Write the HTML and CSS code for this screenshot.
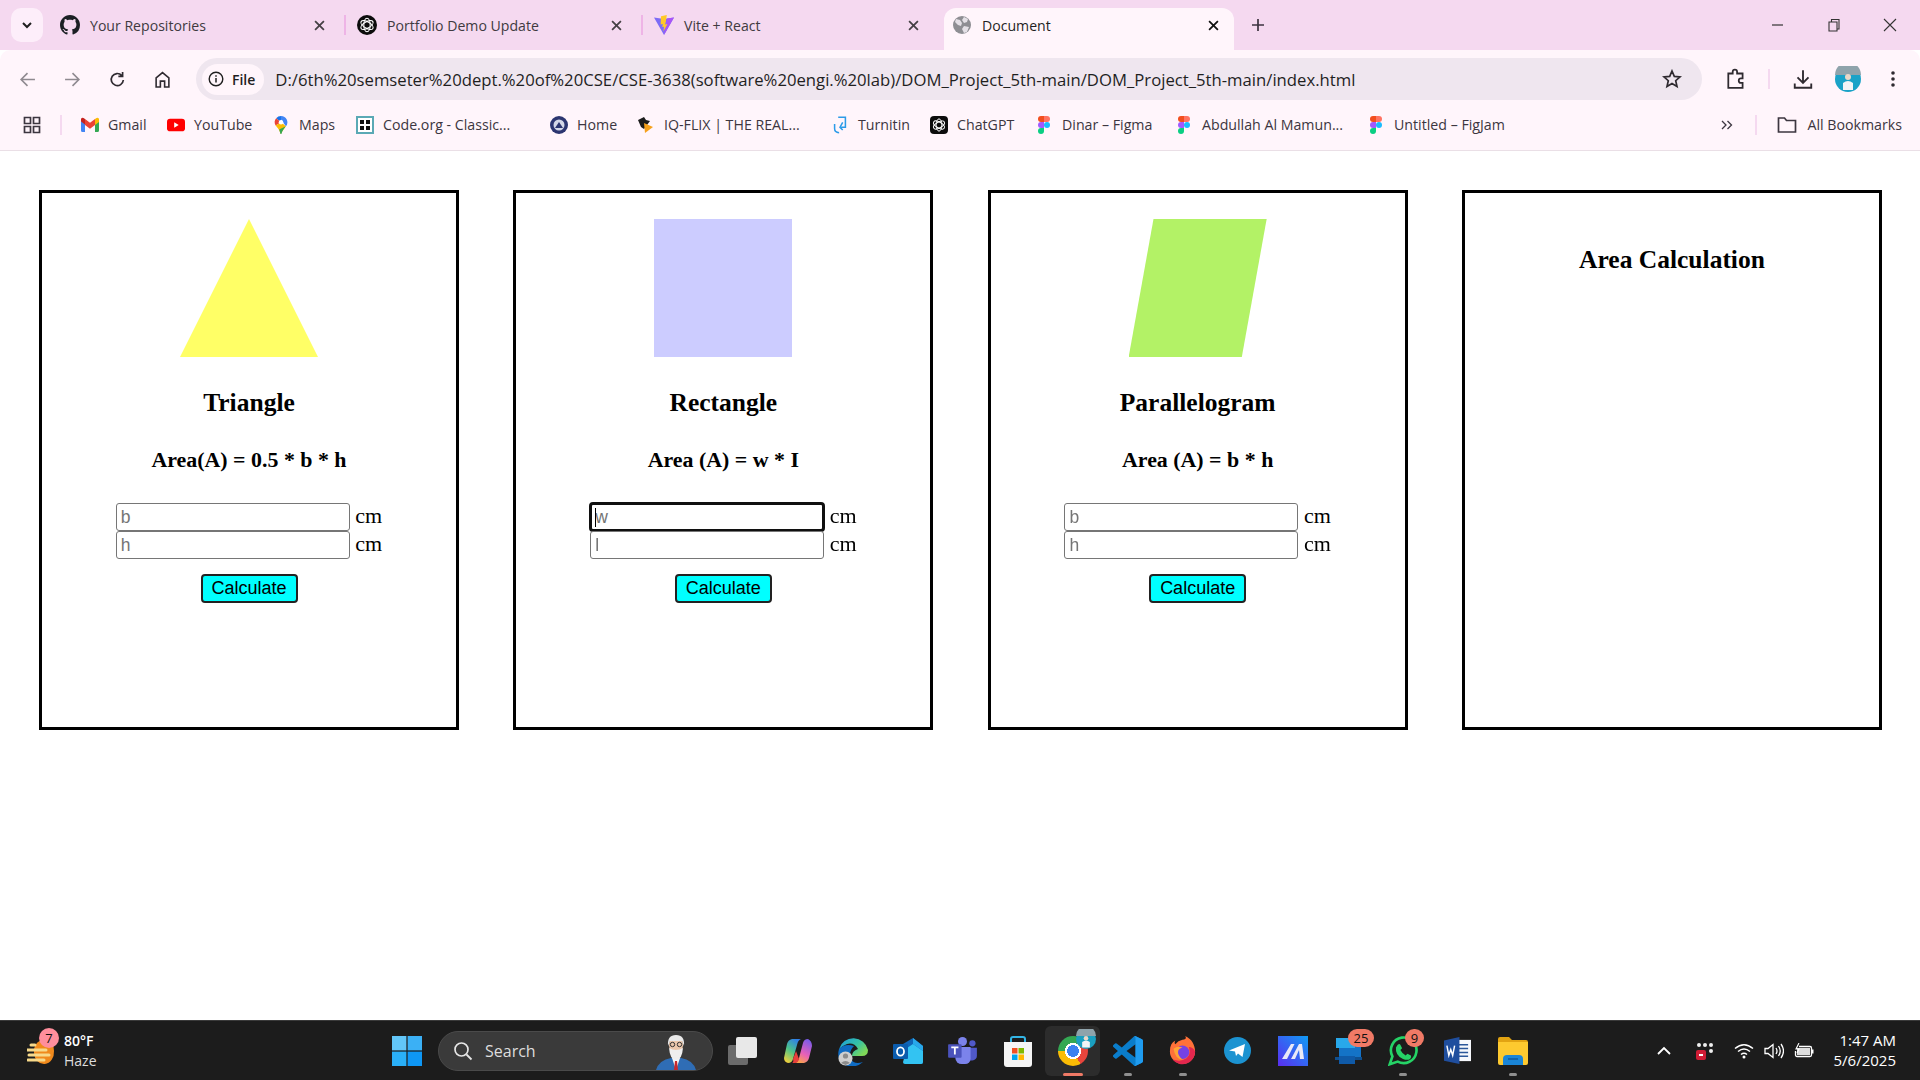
FILE: index.html
```html
<!DOCTYPE html>
<html lang="en">
<head>
<meta charset="UTF-8">
<meta name="viewport" content="width=device-width, initial-scale=1.0">
<title>Document</title>
<link rel="stylesheet" href="styles.css">
</head>
<body>

<svg class="defs" width="0" height="0">
    <symbol id="figma" viewBox="0 0 12 18">
        <path d="M6 0H3a3 3 0 0 0 0 6h3z" fill="#f24e1e"/>
        <path d="M6 0h3a3 3 0 0 1 0 6H6z" fill="#ff7262"/>
        <path d="M6 6H3a3 3 0 0 0 0 6h3z" fill="#a259ff"/>
        <circle cx="9" cy="9" r="3" fill="#1abcfe"/>
        <path d="M6 12H3a3 3 0 1 0 3 3z" fill="#0acf83"/>
    </symbol>
    <symbol id="knot" viewBox="0 0 20 20">
        <g fill="none" stroke="#fff" stroke-width="1.1">
            <ellipse cx="10" cy="10" rx="3.2" ry="6.8"/>
            <ellipse cx="10" cy="10" rx="3.2" ry="6.8" transform="rotate(60 10 10)"/>
            <ellipse cx="10" cy="10" rx="3.2" ry="6.8" transform="rotate(120 10 10)"/>
        </g>
    </symbol>
    <symbol id="close" viewBox="0 0 10 10">
        <path d="M1 1l8 8M9 1l-8 8" fill="none" stroke="currentColor" stroke-width="1.6"/>
    </symbol>
</svg>

<div class="tabstrip">
    <div class="tab-search">
        <svg width="10" height="7" viewBox="0 0 10 7"><path d="M1 1l4 4 4-4" fill="none" stroke="#1f1f1f" stroke-width="2"/></svg>
    </div>
    <div class="tab">
        <svg class="tab-icon" viewBox="0 0 16 16"><path fill="#1b1f24" d="M8 0C3.58 0 0 3.58 0 8c0 3.54 2.29 6.53 5.47 7.59.4.07.55-.17.55-.38 0-.19-.01-.82-.01-1.49-2.01.37-2.53-.49-2.69-.94-.09-.23-.48-.94-.82-1.13-.28-.15-.68-.52-.01-.53.63-.01 1.08.58 1.23.82.72 1.21 1.87.87 2.33.66.07-.52.28-.87.51-1.07-1.78-.2-3.64-.89-3.64-3.95 0-.87.31-1.59.82-2.15-.08-.2-.36-1.02.08-2.12 0 0 .67-.21 2.2.82.64-.18 1.32-.27 2-.27.68 0 1.36.09 2 .27 1.53-1.04 2.2-.82 2.2-.82.44 1.1.16 1.92.08 2.12.51.56.82 1.27.82 2.15 0 3.07-1.87 3.75-3.65 3.95.29.25.54.73.54 1.48 0 1.07-.01 1.93-.01 2.2 0 .21.15.46.55.38A8.013 8.013 0 0 0 16 8c0-4.42-3.58-8-8-8z"/></svg>
        <span class="tab-title">Your Repositories</span>
        <svg class="tab-close"><use href="#close"/></svg>
    </div>
    <div class="tab">
        <svg class="tab-icon" viewBox="0 0 20 20"><circle cx="10" cy="10" r="10" fill="#0c0c0c"/><use href="#knot" width="20" height="20"/></svg>
        <span class="tab-title">Portfolio Demo Update</span>
        <svg class="tab-close"><use href="#close"/></svg>
    </div>
    <div class="tab">
        <svg class="tab-icon" viewBox="0 0 20 20">
            <path d="M0 2.5L10 4l10-1.5L10 20z" fill="#7c6cf6"/>
            <path d="M10 20L20 2.5 13 3.6z" fill="#a855f7"/>
            <path d="M12.8 0L7 1.2 6.6 9.5l2.2-.4-.5 3 1.8-.4-.7 4.8 4-7.5-2.3.4.8-3z" fill="#ffc928"/>
        </svg>
        <span class="tab-title">Vite + React</span>
        <svg class="tab-close"><use href="#close"/></svg>
    </div>
    <div class="tab tab-active">
        <svg class="tab-icon" viewBox="0 0 20 20">
            <circle cx="10" cy="10" r="9" fill="#8e8e93"/>
            <path d="M4 4l4 1 2 3-1 3-3-1-3-3zM12 2l4 2-1 3-3 1-2-3zM12 11l5 1-2 5-3 1-2-4z" fill="#e4e0e6"/>
        </svg>
        <span class="tab-title">Document</span>
        <svg class="tab-close"><use href="#close"/></svg>
    </div>
    <svg class="new-tab" viewBox="0 0 14 14"><path d="M7 1v12M1 7h12" fill="none" stroke="#3c3340" stroke-width="1.7"/></svg>
    <div class="window-controls">
        <svg viewBox="0 0 14 14"><path d="M1 7h11" stroke="#333" stroke-width="1.2"/></svg>
        <svg viewBox="0 0 14 14"><path d="M2 4h8v9H2zM4.5 4V1.500H12V11h-2" fill="none" stroke="#333" stroke-width="1.1"/></svg>
        <svg viewBox="0 0 14 14"><path d="M1 1l12 12M13 1L1 13" fill="none" stroke="#333" stroke-width="1.1"/></svg>
    </div>
</div>

<div class="toolbar">
    <div class="nav-buttons">
        <svg viewBox="0 0 16 16"><path d="M15 8H2M8 2L2 8l6 6" fill="none" stroke="#8f8a90" stroke-width="1.5"/></svg>
        <svg viewBox="0 0 16 16"><path d="M1 8h13M8 2l6 6-6 6" fill="none" stroke="#8f8a90" stroke-width="1.5"/></svg>
        <svg viewBox="0 0 16 16"><path d="M13.5 8.5A5.7 5.7 0 1 1 12 4.2M12.8 1v4h-4" fill="none" stroke="#2f2a30" stroke-width="1.6"/></svg>
        <svg viewBox="0 0 16 16"><path d="M2 15V6.500L8 1.500l6 5V15H10V9.500H6V15z" fill="none" stroke="#2f2a30" stroke-width="1.5"/></svg>
    </div>
    <div class="omnibox">
        <div class="site-chip">
            <svg width="16" height="16" viewBox="0 0 16 16"><circle cx="8" cy="8" r="6.8" fill="none" stroke="#1f1f1f" stroke-width="1.4"/><path d="M8 7v4.500M8 4.200v1.600" stroke="#1f1f1f" stroke-width="1.5"/></svg>
            <span>File</span>
        </div>
        <span class="url">D:/6th%20semseter%20dept.%20of%20CSE/CSE-3638(software%20engi.%20lab)/DOM_Project_5th-main/DOM_Project_5th-main/index.html</span>
        <svg class="star" viewBox="0 0 20 20"><path d="M10 2l2.3 5.4 5.7.5-4.300 3.800 1.300 5.700-5-3-5 3 1.300-5.700L2 7.900l5.700-.5z" fill="none" stroke="#2f2a30" stroke-width="1.7"/></svg>
    </div>
    <div class="toolbar-right">
        <svg class="tool-ext" viewBox="0 0 20 20"><path d="M3 5h4V3.500a2 2 0 0 1 4 0V5h5v4.500h-1.500a2 2 0 0 0 0 4H16V18H3z" fill="none" stroke="#2f2a30" stroke-width="1.6"/></svg>
        <span class="tool-sep"></span>
        <svg class="tool-dl" viewBox="0 0 20 20"><path d="M10 2v11M5 8.500l5 5 5-5M2.500 14v4h15v-4" fill="none" stroke="#2f2a30" stroke-width="1.7"/></svg>
        <svg class="tool-avatar" viewBox="0 0 26 26">
            <circle cx="13" cy="13" r="13" fill="#1aa2c7"/>
            <path d="M0 9a13 13 0 0 1 26 0z" fill="#8fa3ab"/>
            <circle cx="13" cy="11" r="3" fill="#e9d7c8"/>
            <path d="M8 24v-7q5-4 10 0v7z" fill="#f2f4f6"/>
        </svg>
        <svg class="tool-menu" viewBox="0 0 4 18"><circle cx="2" cy="3" r="1.800" fill="#2f2a30"/><circle cx="2" cy="9" r="1.800" fill="#2f2a30"/><circle cx="2" cy="15" r="1.800" fill="#2f2a30"/></svg>
    </div>
</div>

<div class="bookmarks">
    <svg class="apps-icon" viewBox="0 0 18 18"><path d="M1.500 1.500h6v6h-6zM10.500 1.500h6v6h-6zM1.500 10.500h6v6h-6zM10.500 10.500h6v6h-6z" fill="none" stroke="#3c3640" stroke-width="1.7"/></svg>
    <span class="bm-sep"></span>
    <div class="bm bm-gmail">
        <svg viewBox="0 0 18 14"><path d="M0 3v9.500A1.500 1.500 0 0 0 1.500 14H4V6z" fill="#4285f4"/><path d="M18 3v9.500a1.500 1.500 0 0 1-1.500 1.500H14V6z" fill="#34a853"/><path d="M0 3.500L4 6.500V1L2.500 0A1.600 1.600 0 0 0 0 1.500z" fill="#c5221f"/><path d="M4 1v6l5 3.700L14 7V1L9 4.800z" fill="#ea4335"/><path d="M14 1v6l4-3V1.500A1.600 1.600 0 0 0 15.500 0z" fill="#fbbc04"/></svg>
        <span>Gmail</span>
    </div>
    <div class="bm bm-youtube">
        <svg viewBox="0 0 20 14"><rect width="20" height="14" rx="3.5" fill="#f00"/><path d="M8 4l5 3-5 3z" fill="#fff"/></svg>
        <span>YouTube</span>
    </div>
    <div class="bm bm-maps">
        <svg viewBox="0 0 14 20"><path d="M7 0a7 7 0 0 1 5.400 11.500L7 4z" fill="#4285f4"/><path d="M7 0a7 7 0 0 0-5.400 2.500L7 7z" fill="#1a73e8"/><path d="M1.600 2.500A7 7 0 0 0 1 10.500L7 7z" fill="#ea4335"/><path d="M1 10.500c2 2.500 4.500 4.500 5.500 9.500L12.400 11.500 7 7z" fill="#fbbc04"/><path d="M6.500 20h1c.7-3.500 2.900-5.700 4.900-8.500L5 15z" fill="#34a853"/><circle cx="7" cy="7" r="2.500" fill="#fff"/></svg>
        <span>Maps</span>
    </div>
    <div class="bm bm-code">
        <svg viewBox="0 0 18 18"><rect x="1" y="1" width="16" height="16" fill="#fff" stroke="#5aa9b5" stroke-width="2"/><path d="M4 4h4v4H4zM10 4h4v4h-4zM4 10h4v4H4zM10 10h4v4h-4z" fill="#111"/></svg>
        <span>Code.org - Classic...</span>
    </div>
    <div class="bm bm-home">
        <svg viewBox="0 0 18 18"><circle cx="9" cy="9" r="9" fill="#2c3570"/><circle cx="9" cy="9" r="5.500" fill="#d5d8e8"/><path d="M5 12l4-6 4 6z" fill="#2c3570"/></svg>
        <span>Home</span>
    </div>
    <div class="bm bm-iq">
        <svg viewBox="0 0 18 18"><path d="M1 4l6-3 2 3 4 1-3 4-3 4-3-2z" fill="#1c1c1c"/><path d="M7 7l9 4-8 6z" fill="#f6a11b"/></svg>
        <span>IQ-FLIX | THE REAL...</span>
    </div>
    <div class="bm bm-turnitin">
        <svg viewBox="0 0 16 20"><path d="M6 1.500h8v11H9" fill="none" stroke="#2c9be8" stroke-width="1.7"/><path d="M11 7l-3 5.500 3 3M2 9v5q0 4.500 5 4.500" fill="none" stroke="#2c9be8" stroke-width="1.7"/></svg>
        <span>Turnitin</span>
    </div>
    <div class="bm bm-gpt">
        <svg viewBox="0 0 20 20"><rect width="20" height="20" rx="4.5" fill="#0c0c0c"/><use href="#knot" width="20" height="20"/></svg>
        <span>ChatGPT</span>
    </div>
    <div class="bm bm-figma">
        <svg><use href="#figma"/></svg>
        <span>Dinar – Figma</span>
    </div>
    <div class="bm bm-abdullah">
        <svg><use href="#figma"/></svg>
        <span>Abdullah Al Mamun...</span>
    </div>
    <div class="bm bm-untitled">
        <svg><use href="#figma"/></svg>
        <span>Untitled – FigJam</span>
    </div>
    <svg class="bm-more" viewBox="0 0 12 10"><path d="M1 1l4 4-4 4M6.500 1l4 4-4 4" fill="none" stroke="#3c3640" stroke-width="1.3"/></svg>
    <span class="bm-sep bm-sep-end"></span>
    <svg class="folder-icon" viewBox="0 0 20 18"><path d="M1.500 16V2h6l2 2.500h9V16z" fill="none" stroke="#3c3640" stroke-width="1.7"/></svg>
    <span class="bm-all">All Bookmarks</span>
</div>

<main class="page">
    <section class="card">
        <div class="shape triangle"></div>
        <h2>Triangle</h2>
        <h3>Area(A) = 0.5 * b * h</h3>
        <div class="fields">
            <div><input type="text" placeholder="b"> cm</div>
            <div><input type="text" placeholder="h"> cm</div>
        </div>
        <button>Calculate</button>
    </section>
    <section class="card">
        <div class="shape rectangle"></div>
        <h2>Rectangle</h2>
        <h3>Area (A) = w * I</h3>
        <div class="fields">
            <div class="focused"><input type="text" placeholder="w" autofocus> cm<span class="caret"></span></div>
            <div><input type="text" placeholder="l"> cm</div>
        </div>
        <button>Calculate</button>
    </section>
    <section class="card">
        <div class="shape parallelogram"></div>
        <h2>Parallelogram</h2>
        <h3>Area (A) = b * h</h3>
        <div class="fields">
            <div><input type="text" placeholder="b"> cm</div>
            <div><input type="text" placeholder="h"> cm</div>
        </div>
        <button>Calculate</button>
    </section>
    <section class="card card-result">
        <h2>Area Calculation</h2>
    </section>
</main>

<footer class="taskbar">
    <div class="weather">
        <div class="weather-icon">
            <svg viewBox="0 0 28 32" width="28" height="32">
                <path d="M7 14a10 10 0 0 1 20 2 10 12 0 0 1-20 2z" fill="#f08a1d"/>
                <path d="M0 15h19M2 20h20M1 25h16" stroke="#f7d98a" stroke-width="3" stroke-linecap="round"/>
                <path d="M4 10h4" stroke="#f7d98a" stroke-width="3" stroke-linecap="round"/>
            </svg>
            <span class="weather-badge">7</span>
        </div>
        <div class="weather-text">
            <span class="temp">80°F</span>
            <span>Haze</span>
        </div>
    </div>
    <div class="task-item">
        <svg width="30" height="30" viewBox="0 0 30 30"><path d="M0 0h14.400v14.400H0z" fill="#62c6f8"/><path d="M15.600 0H30v14.400H15.600z" fill="#3bb0f5"/><path d="M0 15.600h14.400V30H0z" fill="#2ab0f8"/><path d="M15.600 15.600H30V30H15.600z" fill="#0e97f5"/></svg>
    </div>
    <div class="search-box">
        <svg width="20" height="20" viewBox="0 0 20 20"><circle cx="8.500" cy="8.500" r="6.500" fill="none" stroke="#e6e6e6" stroke-width="1.7"/><path d="M13.500 13.500l5 5" stroke="#e6e6e6" stroke-width="1.8"/></svg>
        <span>Search</span>
        <svg class="search-art" width="42" height="36" viewBox="0 0 42 36">
            <path d="M1 36q3-10 15-12h10q12 2 15 12z" fill="#2f6db5"/>
            <path d="M17 24l4 12 4-12z" fill="#f4f4f4"/>
            <path d="M20 27h2l1 9h-4z" fill="#c8282b"/>
            <ellipse cx="21" cy="11" rx="7" ry="9" fill="#ebc7ac"/>
            <path d="M13 12q-1-11 8-11t8 11l-2-5H15z" fill="#e9e9e9"/>
            <path d="M14 14q7 4 14 0-1 12-7 12t-7-12z" fill="#eeeeee"/>
            <circle cx="17.500" cy="10.500" r="2.200" fill="none" stroke="#333"/>
            <circle cx="24.500" cy="10.500" r="2.200" fill="none" stroke="#333"/>
        </svg>
    </div>
    <div class="task-item">
        <svg width="30" height="30" viewBox="0 0 30 30"><rect x="0" y="9" width="20" height="20" rx="2" fill="#6b6b6b"/><rect x="8" y="1" width="21" height="21" rx="2" fill="#e8e8e8"/></svg>
    </div>
    <div class="task-item">
        <svg width="28" height="24" viewBox="0 0 28 24">
            <defs>
                <linearGradient id="copilotLeft" x1="0.7" y1="0" x2="0.2" y2="1"><stop offset="0" stop-color="#2f7fe8"/><stop offset=".5" stop-color="#4cc48a"/><stop offset="1" stop-color="#f4d03a"/></linearGradient>
                <linearGradient id="copilotRight" x1="0.7" y1="0" x2="0.3" y2="1"><stop offset="0" stop-color="#7a5be8"/><stop offset=".6" stop-color="#e860b8"/><stop offset="1" stop-color="#f9a34a"/></linearGradient>
            </defs>
            <path d="M8 0h9q-3 1-4 6l-4 14q-1 4-5 4-4-1-4-5L3 5q1-4 5-5z" fill="url(#copilotLeft)"/>
            <path d="M11 24h9q4-1 5-5l3-12q0-5-4-7-4 0-5 4l-4 15q-1 4-4 5z" fill="url(#copilotRight)"/>
            <path d="M9 20l3-8 3 8q-1 4-4 4H8q2-1 1-4z" fill="#e8403c"/>
        </svg>
    </div>
    <div class="task-item">
        <svg width="30" height="30" viewBox="0 0 30 30">
            <defs><linearGradient id="edgeTop" x1="0" y1="0" x2="1" y2="0.6"><stop offset="0" stop-color="#1b9de2"/><stop offset=".6" stop-color="#35c1a5"/><stop offset="1" stop-color="#7fd858"/></linearGradient></defs>
            <path d="M1 13A15 15 0 0 1 30 14q0 6-6 6H14q0-5 6-7-4-7-11-5-5 2-8 5z" fill="url(#edgeTop)"/>
            <path d="M1 13q-3 11 6 16 10 4 18-3-9 3-12-3-3-7 3-13-9-3-15 3z" fill="#0f6cc4"/>
            <circle cx="7.500" cy="22.500" r="7" fill="#cfcfcf"/><circle cx="7.500" cy="20" r="2.600" fill="#8c8c8c"/><path d="M3 27q4.500-4 9 0l-4.500 2z" fill="#8c8c8c"/>
        </svg>
    </div>
    <div class="task-item">
        <svg width="30" height="26" viewBox="0 0 30 26">
            <path d="M10 6l10-6 10 8v16a2 2 0 0 1-2 2H12z" fill="#1066b8"/>
            <path d="M14 10l6-4 10 7v11a2 2 0 0 1-2 2H12a2 2 0 0 1-2-2z" fill="#33c3f2"/>
            <path d="M20 0l10 8v5L20 6z" fill="#28a8ea"/>
            <rect x="0" y="6" width="15" height="15" rx="1" fill="#0b5cad"/>
            <ellipse cx="7.500" cy="13.500" rx="3.500" ry="4.200" fill="none" stroke="#fff" stroke-width="1.8"/>
        </svg>
    </div>
    <div class="task-item">
        <svg width="29" height="27" viewBox="0 0 32 30">
            <circle cx="16" cy="5" r="5" fill="#7b83eb"/><circle cx="27" cy="7" r="3.500" fill="#5059c9"/>
            <path d="M22 12h10v9a5 5 0 0 1-5 5h-5z" fill="#5059c9"/>
            <path d="M8 11h17v13a6 6 0 0 1-6 6h-4a7 7 0 0 1-7-7z" fill="#7b83eb"/>
            <rect x="0" y="8" width="15" height="15" rx="1" fill="#4b53bc"/>
            <path d="M3.500 11.500h8M7.500 11.500v8" stroke="#fff" stroke-width="2"/>
        </svg>
    </div>
    <div class="task-item">
        <svg width="30" height="32" viewBox="0 0 30 32">
            <path d="M8 9V4a2 2 0 0 1 2-2h10a2 2 0 0 1 2 2v5" fill="none" stroke="#33b5e5" stroke-width="2"/>
            <path d="M1 7h28v22a3 3 0 0 1-3 3H4a3 3 0 0 1-3-3z" fill="#f5f5f5"/>
            <path d="M9 13h5.500v5.500H9z" fill="#f25022"/><path d="M15.500 13H21v5.500h-5.500z" fill="#7fba00"/>
            <path d="M9 19.500h5.500V25H9z" fill="#00a4ef"/><path d="M15.500 19.500H21V25h-5.500z" fill="#ffb900"/>
        </svg>
    </div>
    <div class="task-item task-active">
        <div class="chrome-logo"></div>
        <svg class="chrome-badge" width="20" height="20" viewBox="0 0 26 26">
            <circle cx="13" cy="13" r="13" fill="#1a9fc0"/>
            <path d="M0 9a13 13 0 0 1 26 0z" fill="#8fa3ab"/>
            <circle cx="13" cy="12" r="3" fill="#e9d7c8"/>
            <path d="M8 24v-7q5-4 10 0v7z" fill="#f2f4f6"/>
        </svg>
        <span class="task-dot"></span>
    </div>
    <div class="task-item">
        <svg width="30" height="30" viewBox="0 0 100 100">
            <path fill-rule="evenodd" fill="#0a7dcb" d="M96.500 10.800L75.900.9a6.200 6.200 0 0 0-7.100 1.200L29.400 38 12.200 25a4.200 4.200 0 0 0-5.300.2l-5.500 5a4.200 4.200 0 0 0 0 6.200L16.300 50 1.400 63.600a4.200 4.200 0 0 0 0 6.200l5.500 5a4.200 4.200 0 0 0 5.300.2l17.200-13 39.400 35.900a6.200 6.200 0 0 0 7.100 1.200l20.600-9.900a6.200 6.200 0 0 0 3.500-5.600V16.400a6.200 6.200 0 0 0-3.500-5.600zM75 27.200L45.100 50 75 72.800z"/>
            <path fill="#1f9cf0" d="M71 .4q2.500-.4 4.900.5l20.600 9.900a6.200 6.200 0 0 1 3.500 5.600v67.200a6.200 6.200 0 0 1-3.500 5.600L75.900 99.100q-2.400.9-4.900.5 4-1.600 4-5.600V6q0-4-4-5.600z"/>
        </svg>
        <span class="task-dot"></span>
    </div>
    <div class="task-item">
        <svg width="27" height="29" viewBox="0 0 30 32">
            <path d="M15 4c6 0 3-4 3-4 7 3 11 10 11 17a14 14 0 0 1-28 0C1 11 3 7 7 5c-1 2-1 3 0 4q3-4 8-5z" fill="#ff7139"/>
            <path d="M29 17A14 14 0 0 1 4 26q9 3 15-1 6-5 3-13 5 0 7 5z" fill="#e3274e"/>
            <circle cx="15" cy="18" r="7.500" fill="#7542e5"/>
            <path d="M5 14q5-4 10-1-5 1-5 5t5 8q-8 0-10-12z" fill="#ffa436"/>
        </svg>
        <span class="task-dot"></span>
    </div>
    <div class="task-item">
        <svg width="27" height="27" viewBox="0 0 27 27">
            <circle cx="13.500" cy="13.500" r="13.500" fill="#1c93d1"/>
            <path d="M5 13.500l16-6.500-2.500 13-4.500-3.500-2 2.500-1-4.500z" fill="#fff"/>
        </svg>
    </div>
    <div class="task-item">
        <svg width="30" height="30" viewBox="0 0 30 30">
            <defs><linearGradient id="cursorbg" x1="0" y1="1" x2="1" y2="0"><stop offset="0" stop-color="#5a2df0"/><stop offset="1" stop-color="#0f9cf5"/></linearGradient></defs>
            <rect width="30" height="30" fill="url(#cursorbg)"/>
            <path d="M4 23L13 8h3.500L9 23zM13 23L21 8h3l2 15h-4l-1-9-4 9z" fill="#e9e9f7"/>
        </svg>
    </div>
    <div class="task-item">
        <svg width="29" height="26" viewBox="0 0 29 26">
            <rect x="2" y="19" width="27" height="3" fill="#0f4f8f"/>
            <rect x="3" y="0" width="19" height="10" fill="#28a8ea"/><rect x="6" y="10" width="16" height="8" fill="#1473c7"/><rect x="6" y="18" width="16" height="8" fill="#0f5aa8"/>
            <rect x="22" y="5" width="6" height="14" fill="#1473c7"/>
        </svg>
        <span class="task-count">25</span>
    </div>
    <div class="task-item">
        <svg width="30" height="30" viewBox="0 0 34 34">
            <path d="M2 32l3-9A14.500 14.500 0 1 1 11 29z" fill="none" stroke="#25d366" stroke-width="3"/>
            <path d="M11 10q2-2 3 0l2 4-2 2q2 4 6 6l2-2 4 2q1 2-1 4-3 2-8 0-9-4-8-13z" fill="#25d366"/>
        </svg>
        <span class="task-count task-count-small">9</span>
        <span class="task-dot"></span>
    </div>
    <div class="task-item">
        <svg width="27" height="27" viewBox="0 0 28 28">
            <rect x="12" y="3" width="16" height="22" fill="#f6f8fc"/>
            <path d="M15 8h10M15 12h10M15 16h10M15 20h10" stroke="#2b579a" stroke-width="1.5"/>
            <path d="M0 3.500L16 0v28L0 24.500z" fill="#1f4e9e"/>
            <path d="M3 9l2 10 2-6 2 6 2-10" fill="none" stroke="#fff" stroke-width="1.5"/>
        </svg>
    </div>
    <div class="task-item">
        <svg width="30" height="28" viewBox="0 0 30 28">
            <path d="M0 2a2 2 0 0 1 2-2h9l3 3h14a2 2 0 0 1 2 2v3H0z" fill="#e2a312"/>
            <path d="M0 5h30v21a2 2 0 0 1-2 2H2a2 2 0 0 1-2-2z" fill="#fdc92f"/>
            <path d="M5 28v-6a4 4 0 0 1 4-4h12a4 4 0 0 1 4 4v6z" fill="#1a85d6"/>
            <path d="M10 22h10" stroke="#0c5a9e" stroke-width="1.5"/>
        </svg>
        <span class="task-dot"></span>
    </div>
    <div class="tray">
        <svg class="tray-up" width="14" height="9" viewBox="0 0 14 9"><path d="M1 8l6-6 6 6" fill="none" stroke="#fff" stroke-width="1.8"/></svg>
        <svg class="tray-app" width="18" height="18" viewBox="0 0 18 18">
            <rect x="0" y="8" width="10" height="10" rx="2" fill="#d01c35"/>
            <circle cx="3" cy="3" r="2" fill="#eee"/><circle cx="9" cy="3" r="2" fill="#eee"/><circle cx="15" cy="3" r="2" fill="#eee"/><circle cx="15" cy="9" r="2" fill="#eee"/>
            <path d="M3 13h4" stroke="#fff" stroke-width="2"/>
        </svg>
        <svg class="tray-wifi" width="20" height="16" viewBox="0 0 20 16"><path d="M1 5.500q9-7.500 18 0M4 8.500q6-5 12 0M7 11.500q3-2.500 6 0" fill="none" stroke="#fff" stroke-width="1.5"/><circle cx="10" cy="14" r="1.500" fill="#fff"/></svg>
        <svg class="tray-vol" width="20" height="16" viewBox="0 0 20 16"><path d="M1 5.500h3L9 1.500v13L4 10.500H1z" fill="none" stroke="#fff" stroke-width="1.3"/><path d="M12 5q2 3 0 6M14.500 3q3.500 5 0 10M17 1q5 7 0 14" fill="none" stroke="#fff" stroke-width="1.3"/></svg>
        <svg class="tray-bat" width="20" height="16" viewBox="0 0 20 16"><path d="M5 3.500h11a1.500 1.500 0 0 1 1.500 1.500v7a1.500 1.500 0 0 1-1.500 1.500H3A1.500 1.500 0 0 1 1.500 12V8" fill="none" stroke="#fff" stroke-width="1.3"/><rect x="3" y="5" width="13" height="7" fill="#ddd"/><path d="M18 6.500h1.500v4H18z" fill="#fff"/><path d="M5 0L2 6h3L3 10" fill="none" stroke="#fff" stroke-width="1.1"/></svg>
        <div class="clock"><span>1:47 AM</span><span>5/6/2025</span></div>
    </div>
</footer>

</body>
</html>
```
FILE: styles.css
```css
* {
    box-sizing: border-box;
}
html, body {
    margin: 0;
    height: 100%;
}
body {
    display: flex;
    flex-direction: column;
    width: 1920px;
    height: 1080px;
    overflow: hidden;
    background-color: #fff;
    font-family: "Open Sans", "Noto Sans", sans-serif;
}
.defs {
    position: absolute;
}

/* tab strip */
.tabstrip {
    display: flex;
    align-items: center;
    height: 50px;
    flex-shrink: 0;
    padding-left: 11px;
    background-color: #f5d9f0;
}
.tab-search {
    display: flex;
    align-items: center;
    justify-content: center;
    width: 32px;
    height: 34px;
    margin-right: 4px;
    border-radius: 10px;
    background-color: #fdeefa;
}
.tab {
    display: flex;
    align-items: center;
    width: 297px;
    height: 50px;
    padding-left: 13px;
    padding-right: 19px;
    color: #403a40;
    font-size: 14.1px;
    position: relative;
}
.tab + .tab::before {
    content: "";
    position: absolute;
    left: 0;
    top: 15px;
    width: 2px;
    height: 20px;
    background-color: #eeb4e6;
}
.tab-icon {
    width: 20px;
    height: 20px;
    flex-shrink: 0;
    margin-right: 10px;
}
.tab-title {
    flex: 1;
    white-space: nowrap;
}
.tab-close {
    width: 11px;
    height: 11px;
    color: #454045;
}
.tab-active {
    width: 290px;
    height: 42px;
    margin-top: 8px;
    margin-left: 6px;
    padding-left: 8px;
    padding-right: 15px;
    padding-bottom: 8px;
    color: #1f1f1f;
    border-radius: 12px 12px 0 0;
    background-color: #fff5fb;
}
.tab + .tab.tab-active::before {
    display: none;
}
.tab-active .tab-close {
    color: #111;
}
.new-tab {
    width: 14px;
    height: 14px;
    margin-left: 17px;
}
.window-controls {
    display: flex;
    gap: 42px;
    margin-left: auto;
    padding-right: 23px;
}
.window-controls svg {
    width: 14px;
    height: 14px;
}

/* toolbar */
.toolbar {
    display: flex;
    align-items: center;
    height: 58px;
    flex-shrink: 0;
    padding: 8px 0 8px 19px;
    border-radius: 10px 10px 0 0;
    background-color: #fff5fb;
}
.nav-buttons {
    display: flex;
    gap: 28px;
    width: 177px;
}
.nav-buttons svg {
    width: 17px;
    height: 17px;
}
.omnibox {
    display: flex;
    align-items: center;
    width: 1506px;
    height: 42px;
    padding-left: 6px;
    padding-right: 20px;
    border-radius: 21px;
    background-color: #efe6ef;
}
.site-chip {
    display: flex;
    align-items: center;
    gap: 8px;
    height: 31px;
    padding: 0 9px 0 6px;
    border-radius: 16px;
    background-color: #fff5fb;
    color: #1f1f1f;
    font-size: 14px;
    font-weight: 600;
}
.url {
    flex: 1;
    margin-left: 11px;
    color: #1f1f1f;
    font-size: 16.7px;
    white-space: nowrap;
}
.star {
    width: 20px;
    height: 20px;
}
.toolbar-right {
    display: flex;
    align-items: center;
}
.tool-ext {
    width: 22px;
    height: 22px;
    margin-left: 23px;
}
.tool-sep {
    width: 2px;
    height: 20px;
    margin-left: 21px;
    background-color: #f5d9f0;
}
.tool-dl {
    width: 22px;
    height: 22px;
    margin-left: 22px;
}
.tool-avatar {
    width: 26px;
    height: 26px;
    margin-left: 21px;
}
.tool-menu {
    width: 4px;
    height: 18px;
    margin-left: 30px;
}

/* bookmarks */
.bookmarks {
    display: flex;
    align-items: center;
    height: 43px;
    flex-shrink: 0;
    padding-left: 23px;
    padding-bottom: 9px;
    border-bottom: 1px solid #eadfe6;
    background-color: #fff5fb;
    color: #3c3640;
    font-size: 14.2px;
}
.apps-icon {
    width: 18px;
    height: 18px;
}
.bm-sep {
    width: 2px;
    height: 20px;
    margin-left: 19px;
    background-color: #f5d9f0;
}
.bm {
    display: flex;
    align-items: center;
    flex-shrink: 0;
    gap: 9px;
    white-space: nowrap;
}
.bm svg {
    width: 18px;
    height: 18px;
    flex-shrink: 0;
}
.bm-gmail {
    width: 86px;
    margin-left: 19px;
}
.bm-youtube {
    width: 105px;
}
.bm-maps {
    width: 84px;
}
.bm-code,
.bm-iq {
    width: 194px;
}
.bm-home {
    width: 87px;
}
.bm-turnitin {
    width: 99px;
}
.bm-gpt {
    width: 105px;
}
.bm-figma {
    width: 140px;
}
.bm-abdullah {
    width: 192px;
}
.bm-more {
    width: 12px;
    height: 10px;
    margin-left: auto;
}
.bm-sep-end {
    margin-left: 22px;
}
.folder-icon {
    width: 20px;
    height: 18px;
    margin-left: 20px;
}
.bm-all {
    margin-left: 10px;
    margin-right: 18px;
    white-space: nowrap;
}

/* page */
.page {
    display: flex;
    flex: 1;
    align-items: flex-start;
    justify-content: space-between;
    padding: 39px 38px 0 39px;
}
.card {
    width: 420px;
    height: 540px;
    padding-top: 26px;
    border: 3px solid #000;
    text-align: center;
    color: #000;
    font-family: "Liberation Serif", "Times New Roman", serif;
}
.shape {
    width: 138px;
    height: 138px;
    margin: 0 auto;
}
.triangle {
    background-color: #ffff66;
    clip-path: polygon(50% 0, 100% 100%, 0 100%);
}
.rectangle {
    background-color: #ccccff;
}
.parallelogram {
    background-color: #b3f266;
    clip-path: polygon(18% 0, 100% 0, 82% 100%, 0 100%);
}
.card h2 {
    margin: 31px 0 0;
    font-size: 25.5px;
    line-height: 29px;
}
.card h3 {
    margin: 30px 0 0;
    font-size: 21.9px;
    line-height: 25px;
}
.fields {
    margin-top: 31px;
    font-size: 22px;
}
.fields div {
    position: relative;
    height: 28px;
    line-height: 26px;
}
.fields input {
    width: 234px;
    height: 28px;
    padding: 1px 4px;
    border: 1px solid #767676;
    border-radius: 3px;
    font-family: "Liberation Sans", Arial, sans-serif;
    font-size: 17.5px;
    vertical-align: top;
}
.fields input:focus {
    outline: 3px solid #101010;
    outline-offset: -2px;
}
.caret {
    position: absolute;
    left: 79px;
    top: 5px;
    width: 1px;
    height: 19px;
    background-color: #000;
}
.card button {
    width: 97px;
    height: 29px;
    margin-top: 15px;
    padding: 0;
    border: 2px solid #222;
    border-radius: 4px;
    background-color: #00ffff;
    color: #000;
    font-family: "Liberation Sans", Arial, sans-serif;
    font-size: 18px;
}
.card-result {
    padding-top: 0;
}
.card h2.result-title,
.card-result h2 {
    margin: 52px 0 0;
}

/* taskbar */
.taskbar {
    display: flex;
    align-items: center;
    height: 60px;
    flex-shrink: 0;
    border-top: 1px solid #3a3a3a;
    background-color: #1c1c1c;
    color: #fff;
}
.weather {
    display: flex;
    width: 379px;
    padding-left: 27px;
    align-items: center;
}
.weather-icon {
    position: relative;
    width: 28px;
    height: 32px;
}
.weather-badge {
    position: absolute;
    top: -7px;
    right: -4px;
    width: 20px;
    height: 20px;
    border-radius: 50%;
    background-color: #ff8e9c;
    color: #111;
    font-size: 13px;
    line-height: 20px;
    text-align: center;
}
.weather-text {
    display: flex;
    flex-direction: column;
    margin-left: 9px;
    font-size: 14px;
    line-height: 20px;
    color: #ddd;
}
.temp {
    color: #fff;
    font-weight: 600;
}
.task-item {
    position: relative;
    display: flex;
    align-items: center;
    justify-content: center;
    flex-shrink: 0;
    width: 55px;
    height: 50px;
}
.task-active {
    border-radius: 6px;
    background-color: #2c2c2c;
}
.task-dot {
    position: absolute;
    bottom: 0;
    left: 50%;
    width: 8px;
    height: 3px;
    margin-left: -4px;
    border-radius: 2px;
    background-color: #8f8f8f;
}
.task-active .task-dot {
    width: 20px;
    margin-left: -10px;
    background-color: #f07a66;
}
.chrome-logo {
    width: 30px;
    height: 30px;
    border-radius: 50%;
    background: radial-gradient(circle, #3b82f0 0 6px, #fff 6px 8px, transparent 8px),
        conic-gradient(from 30deg, #e8453c 0 120deg, #fbbc05 120deg 240deg, #34a853 240deg 360deg);
}
.chrome-badge {
    position: absolute;
    top: 3px;
    right: 4px;
}
.task-count {
    position: absolute;
    top: 3px;
    right: 1px;
    width: 26px;
    height: 18px;
    border-radius: 9px;
    background-color: #f07a66;
    color: #111;
    font-size: 13px;
    line-height: 18px;
    text-align: center;
}
.task-count-small {
    width: 19px;
    right: 6px;
}
.search-box {
    display: flex;
    align-items: center;
    flex-shrink: 0;
    width: 275px;
    height: 40px;
    margin-left: 4px;
    margin-right: 2px;
    padding-left: 14px;
    border: 1px solid #4a4a4a;
    border-radius: 20px;
    background-color: #3a3a3a;
    color: #ddd;
    font-size: 16px;
}
.search-box span {
    margin-left: 12px;
    flex: 1;
}
.search-art {
    margin-right: 15px;
    align-self: flex-end;
}
.tray {
    display: flex;
    align-items: center;
    flex: 1;
    padding-left: 117px;
}
.tray-app {
    margin-left: 25px;
}
.tray-wifi {
    margin-left: 20px;
}
.tray-vol {
    margin-left: 10px;
}
.tray-bat {
    margin-left: 10px;
}
.clock {
    display: flex;
    flex-direction: column;
    align-items: flex-end;
    margin-left: auto;
    margin-right: 24px;
    margin-bottom: 2px;
    font-size: 15px;
    line-height: 20px;
}
```
